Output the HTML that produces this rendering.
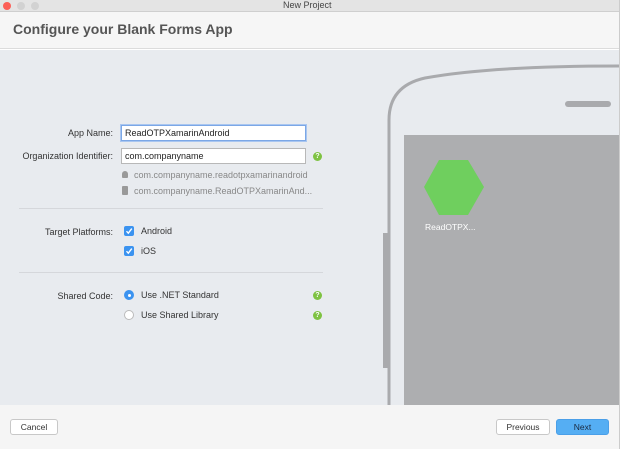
<!DOCTYPE html>
<html><head><style>
*{margin:0;padding:0;box-sizing:border-box}
body{width:624px;height:449px;overflow:hidden;background:#fff;font-family:"Liberation Sans",sans-serif;position:relative}
.a{position:absolute}
.lbl{position:absolute;right:511px;font-size:9px;color:#333;text-align:right;white-space:nowrap}
.txt{position:absolute;font-size:9px;color:#333;white-space:nowrap}
.inp{position:absolute;left:121px;width:185px;height:16px;background:#fff;border:1px solid #b8b8b8;font-size:9px;color:#222;padding:2px 3px;line-height:10px}
.help{position:absolute;width:9px;height:9px;border-radius:50%;background:#7ec242;color:#fff;font-size:7px;font-weight:bold;text-align:center;line-height:9px}
.cb{position:absolute;left:124px;width:10px;height:10px;border-radius:2px;background:#3b93f0}
.btn{position:absolute;top:419px;height:16px;border:1px solid #c8c8c8;border-radius:3px;background:#fff;font-size:8.5px;color:#333;text-align:center;line-height:14px}
</style></head><body>
<div class="a" style="left:0;top:0;width:619px;height:12px;background:#e4e4e4;border-bottom:1px solid #cfcfcf"></div>
<div class="a" style="left:3px;top:2px;width:8px;height:8px;border-radius:50%;background:#fc5f57"></div>
<div class="a" style="left:17px;top:2px;width:8px;height:8px;border-radius:50%;background:#d2d2d2"></div>
<div class="a" style="left:31px;top:2px;width:8px;height:8px;border-radius:50%;background:#d2d2d2"></div>
<div class="txt" style="left:283px;top:0px;color:#444;font-size:9px">New Project</div>
<div class="a" style="left:0;top:12px;width:619px;height:37px;background:#f6f6f6;border-bottom:1px solid #dcdcdc"></div>
<div class="txt" style="left:13px;top:21px;font-size:14px;font-weight:bold;color:#555">Configure your Blank Forms App</div>
<div class="a" style="left:0;top:50px;width:619px;height:355px;background:#e8ebef;overflow:hidden">
<svg width="619" height="355" style="position:absolute;left:0;top:0">
<path d="M389 355 L389 70 Q389 36 425 28 Q490 16 619 16" fill="none" stroke="#a9aaad" stroke-width="3"/>
<rect x="383" y="183" width="5" height="135" fill="#a9aaad"/>
<rect x="565" y="51" width="46" height="6" rx="3" fill="#a9aaad"/>
<rect x="404" y="85" width="215" height="270" fill="#adaeb0"/>
<polygon points="424,137 439,110 468,110 484,137 468,165 439,165" fill="#6fcf5e"/>
</svg>
<div class="txt" style="left:425px;top:172px;color:#fff;font-size:8.5px">ReadOTPX...</div>
</div>
<div class="a" style="left:619px;top:0;width:5px;height:449px;background:#fff;border-left:1px solid #ccc"></div>
<div class="lbl" style="top:128px">App Name:</div>
<div class="inp" style="top:125px;border:1px solid #7ba7e6;box-shadow:0 0 0 1px #a9c6f0">ReadOTPXamarinAndroid</div>
<div class="lbl" style="top:151px">Organization Identifier:</div>
<div class="inp" style="top:148px">com.companyname</div>
<div class="help" style="left:313px;top:152px">?</div>
<div class="a" style="left:122px;top:171px;width:6px;height:7px;background:#999;border-radius:3px 3px 1px 1px"></div>
<div class="txt" style="left:134px;top:170px;color:#888">com.companyname.readotpxamarinandroid</div>
<div class="a" style="left:122px;top:186px;width:6px;height:9px;background:#999;border-radius:1px"></div>
<div class="txt" style="left:134px;top:186px;color:#888">com.companyname.ReadOTPXamarinAnd...</div>
<div class="a" style="left:19px;top:208px;width:304px;height:1px;background:#d5d7db"></div>
<div class="lbl" style="top:227px">Target Platforms:</div>
<div class="cb" style="top:226px"><svg width="10" height="10" style="position:absolute;left:0;top:0"><path d="M2.5 5.2 L4.3 7.2 L7.8 2.6" fill="none" stroke="#fff" stroke-width="1.4"/></svg></div>
<div class="txt" style="left:141px;top:226px">Android</div>
<div class="cb" style="top:246px"><svg width="10" height="10" style="position:absolute;left:0;top:0"><path d="M2.5 5.2 L4.3 7.2 L7.8 2.6" fill="none" stroke="#fff" stroke-width="1.4"/></svg></div>
<div class="txt" style="left:141px;top:246px">iOS</div>
<div class="a" style="left:19px;top:272px;width:304px;height:1px;background:#d5d7db"></div>
<div class="lbl" style="top:291px">Shared Code:</div>
<div class="a" style="left:124px;top:290px;width:10px;height:10px;border-radius:50%;background:#3b93f0"></div>
<div class="a" style="left:127.5px;top:293.5px;width:3px;height:3px;border-radius:50%;background:#fff"></div>
<div class="txt" style="left:141px;top:290px">Use .NET Standard</div>
<div class="help" style="left:313px;top:291px">?</div>
<div class="a" style="left:124px;top:310px;width:10px;height:10px;border-radius:50%;background:#fff;border:1px solid #bbb"></div>
<div class="txt" style="left:141px;top:310px">Use Shared Library</div>
<div class="help" style="left:313px;top:311px">?</div>
<div class="a" style="left:0;top:405px;width:619px;height:44px;background:#f5f5f5"></div>
<div class="btn" style="left:10px;width:48px">Cancel</div>
<div class="btn" style="left:496px;width:54px">Previous</div>
<div class="btn" style="left:556px;width:53px;background:#55aef3;border-color:#4a9fe8;color:#1a2a40">Next</div>
</body></html>
